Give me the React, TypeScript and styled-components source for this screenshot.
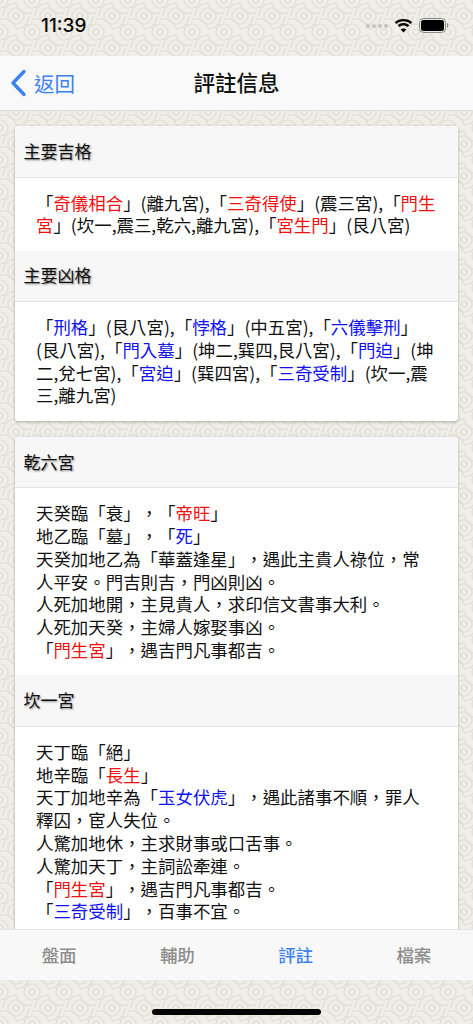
import React from "react";
import styled, { createGlobalStyle } from "styled-components";

const pattern = `url("data:image/svg+xml,%3Csvg xmlns='http://www.w3.org/2000/svg' width='32' height='32'%3E%3Cg fill='none' stroke='%23e3e1d9' stroke-width='1.7'%3E%3Ccircle cx='16' cy='16' r='3'/%3E%3Ccircle cx='16' cy='16' r='8'/%3E%3Ccircle cx='0' cy='0' r='3'/%3E%3Ccircle cx='32' cy='0' r='3'/%3E%3Ccircle cx='0' cy='32' r='3'/%3E%3Ccircle cx='32' cy='32' r='3'/%3E%3Ccircle cx='0' cy='0' r='8'/%3E%3Ccircle cx='32' cy='0' r='8'/%3E%3Ccircle cx='0' cy='32' r='8'/%3E%3Ccircle cx='32' cy='32' r='8'/%3E%3Cpath d='M3 16A13 13 0 0 1 16 3M29 16A13 13 0 0 1 16 29M16 3A13 13 0 0 0 32 13M16 29A13 13 0 0 0 0 19'/%3E%3C/g%3E%3C/svg%3E")`;

const Global = createGlobalStyle`
  html, body { margin: 0; padding: 0; }
  body {
    font-family: "Noto Sans CJK TC", "Noto Sans", sans-serif;
    text-spacing-trim: space-all;
    font-kerning: none;
  }
`;

const Screen = styled.div`
  width: 473px;
  height: 1024px;
  overflow: hidden;
  display: flex;
  flex-direction: column;
  background-color: #efeee7;
  background-image: ${pattern};
`;

const StatusBar = styled.div`
  height: 56px;
  flex: none;
  display: flex;
  align-items: center;
  justify-content: space-between;
  padding: 0 24px 5px 41px;
  box-sizing: border-box;
`;

const Time = styled.span`
  font-family: Inter, "Liberation Sans", sans-serif;
  font-size: 19px;
  font-weight: 500;
  color: #0a0a0a;
`;

const StatusIcons = styled.div`
  display: flex;
  align-items: center;
  gap: 6px;
`;

const NavBar = styled.header`
  height: 55px;
  flex: none;
  box-sizing: border-box;
  background: #f9f9f9;
  border-bottom: 1px solid #dfdfdc;
  position: relative;
  display: flex;
  align-items: center;
  justify-content: center;
`;

const Back = styled.div`
  position: absolute;
  left: 10px;
  top: 0;
  bottom: 0;
  display: flex;
  align-items: center;
  gap: 7px;
  color: #3b82f0;
  font-size: 20.5px;
  line-height: 1;
`;

const Title = styled.h1`
  margin: 0 0 3px;
  font-size: 21.5px;
  font-weight: 500;
  color: #111;
  line-height: 1;
`;

const Scroll = styled.main`
  flex: 1;
  min-height: 0;
  overflow: hidden;
  padding: 15px 15px 0;
  display: flex;
  flex-direction: column;
  gap: 16px;
`;

const Card = styled.section`
  flex: none;
  background: #fff;
  border-radius: 3px;
  box-shadow: 0 1px 3px rgba(0, 0, 0, 0.28);
  overflow: hidden;
`;

const Heading = styled.h2`
  margin: 0;
  height: 51.5px;
  box-sizing: border-box;
  background: #f7f7f7;
  border-bottom: 1px solid #e2e2e2;
  padding: 0 8.5px 2px;
  display: flex;
  align-items: center;
  font-size: 17px;
  font-weight: 400;
  color: #111;
  text-shadow: 1px 1px 2px rgba(0, 0, 0, 0.45);
`;

const Body = styled.div`
  padding: 14px 21px 13.5px;
  font-size: 17.45px;
  line-height: 22.8px;
  color: #111;
`;

const Line = styled.div`
  white-space: nowrap;
`;

const Mark = styled.span<{ $tone: "good" | "bad" }>`
  color: ${(p) => (p.$tone === "good" ? "#f01010" : "#1010f0")};
`;

const TabBar = styled.nav`
  height: 51px;
  flex: none;
  box-sizing: border-box;
  background: #f8f8f8;
  border-top: 1px solid #e4e4e4;
  display: grid;
  grid-template-columns: repeat(4, 1fr);
  align-items: center;
  justify-items: center;
`;

const Tab = styled.div<{ $active?: boolean }>`
  font-size: 17.5px;
  font-weight: 500;
  margin-bottom: 2px;
  color: ${(p) => (p.$active ? "#3b82f0" : "#8d8d8d")};
`;

const HomeArea = styled.div`
  height: 44px;
  flex: none;
  display: flex;
  justify-content: center;
  padding-top: 29px;
  box-sizing: border-box;
`;

const HomeBar = styled.div`
  width: 169px;
  height: 6px;
  border-radius: 3px;
  background: #050505;
`;

type Seg = string | [string, "good" | "bad"];
const g = (s: string): Seg => [s, "good"];
const b = (s: string): Seg => [s, "bad"];

const Rich = ({ lines }: { lines: Seg[][] }) => (
  <Body>
    {lines.map((segs, i) => (
      <Line key={i}>
        {segs.map((s, j) =>
          typeof s === "string" ? (
            <React.Fragment key={j}>{s}</React.Fragment>
          ) : (
            <Mark key={j} $tone={s[1]}>
              {s[0]}
            </Mark>
          )
        )}
      </Line>
    ))}
  </Body>
);

export default function App() {
  return (
    <Screen>
      <Global />
      <StatusBar>
        <Time>11:39</Time>
        <StatusIcons>
          <svg width="22" height="8" viewBox="0 0 22 8">
            {[2, 8, 14, 20].map((x) => (
              <circle key={x} cx={x} cy="4" r="2" fill="#c4c3bd" />
            ))}
          </svg>
          <svg width="19" height="14" viewBox="0 0 19 14">
            <path d="M9.500 2.200c2.700 0 5.100 1 7 2.800L18.200 3.200C15.900 1 12.800 0 9.500 0S3.100 1 .8 3.200L2.500 5c1.900-1.800 4.300-2.800 7-2.800z" fill="#000" />
            <path d="M9.500 6.500c1.600 0 3 .6 4.100 1.600l1.700-1.800C13.700 4.900 11.700 4.100 9.500 4.100S5.300 4.900 3.700 6.300l1.700 1.800c1.100-1 2.500-1.600 4.100-1.600z" fill="#000" />
            <path d="M9.500 13.500l2.800-3c-.8-.6-1.700-1-2.800-1s-2 .4-2.800 1z" fill="#000" />
          </svg>
          <svg width="30" height="15" viewBox="0 0 30 15">
            <rect x="0.500" y="0.500" width="26" height="14" rx="4" fill="none" stroke="#8b8a85" />
            <rect x="2" y="2" width="23" height="11" rx="2.500" fill="#000" />
            <path d="M28 5v5c.8-.3 1.400-1.300 1.400-2.500S28.800 5.300 28 5z" fill="#8b8a85" />
          </svg>
        </StatusIcons>
      </StatusBar>
      <NavBar>
        <Back>
          <svg width="17" height="28" viewBox="0 0 17 28">
            <path d="M14 2.500 3 14l11 11.500" fill="none" stroke="#3b82f0" strokeWidth="3.400" strokeLinecap="round" strokeLinejoin="round" />
          </svg>
          <span>返回</span>
        </Back>
        <Title>評註信息</Title>
      </NavBar>
      <Scroll>
        <Card>
          <Heading>主要吉格</Heading>
          <Rich
            lines={[
              ["「", g("奇儀相合"), "」(離九宮),「", g("三奇得使"), "」(震三宮),「", g("門生")],
              [g("宮"), "」(坎一,震三,乾六,離九宮),「", g("宮生門"), "」(艮八宮)"],
            ]}
          />
          <Heading>主要凶格</Heading>
          <Rich
            lines={[
              ["「", b("刑格"), "」(艮八宮),「", b("悖格"), "」(中五宮),「", b("六儀擊刑"), "」"],
              ["(艮八宮),「", b("門入墓"), "」(坤二,巽四,艮八宮),「", b("門迫"), "」(坤"],
              ["二,兌七宮),「", b("宮迫"), "」(巽四宮),「", b("三奇受制"), "」(坎一,震"],
              ["三,離九宮)"],
            ]}
          />
        </Card>
        <Card>
          <Heading>乾六宮</Heading>
          <Rich
            lines={[
              ["天癸臨「衰」，「", g("帝旺"), "」"],
              ["地乙臨「墓」，「", b("死"), "」"],
              ["天癸加地乙為「華蓋逢星」，遇此主貴人祿位，常"],
              ["人平安。門吉則吉，門凶則凶。"],
              ["人死加地開，主見貴人，求印信文書事大利。"],
              ["人死加天癸，主婦人嫁娶事凶。"],
              ["「", g("門生宮"), "」，遇吉門凡事都吉。"],
            ]}
          />
          <Heading>坎一宮</Heading>
          <Rich
            lines={[
              ["天丁臨「絕」"],
              ["地辛臨「", g("長生"), "」"],
              ["天丁加地辛為「", b("玉女伏虎"), "」，遇此諸事不順，罪人"],
              ["釋囚，宦人失位。"],
              ["人驚加地休，主求財事或口舌事。"],
              ["人驚加天丁，主詞訟牽連。"],
              ["「", g("門生宮"), "」，遇吉門凡事都吉。"],
              ["「", b("三奇受制"), "」，百事不宜。"],
            ]}
          />
        </Card>
      </Scroll>
      <TabBar>
        <Tab>盤面</Tab>
        <Tab>輔助</Tab>
        <Tab $active>評註</Tab>
        <Tab>檔案</Tab>
      </TabBar>
      <HomeArea>
        <HomeBar />
      </HomeArea>
    </Screen>
  );
}
